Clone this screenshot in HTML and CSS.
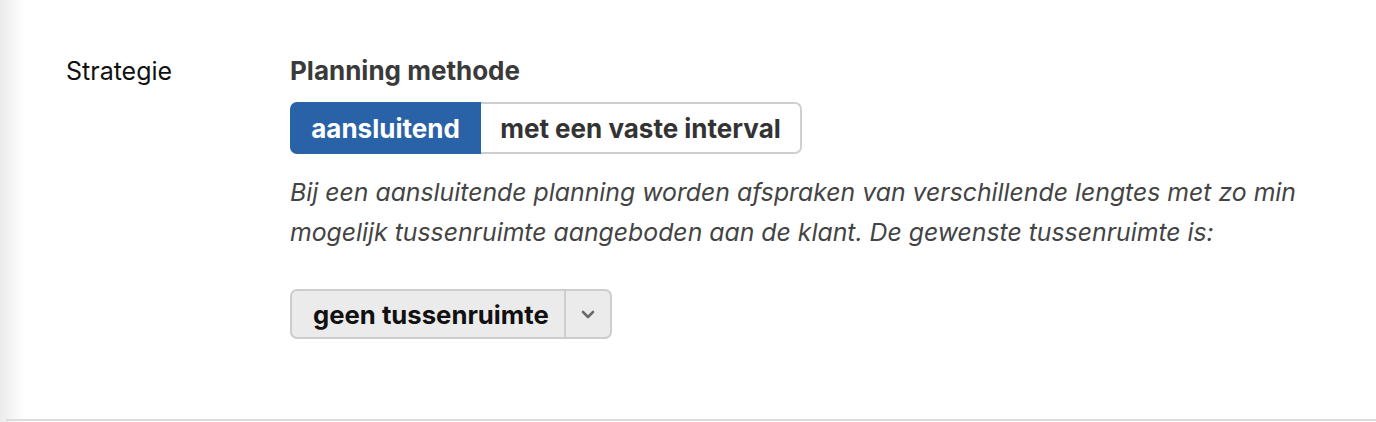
FILE: index.html
```html
<!DOCTYPE html>
<html lang="nl">
<head>
<meta charset="utf-8">
<link rel="stylesheet" href="styles.css">
</head>
<body>
<div class="page">
  <div class="section">
    <div class="row">
      <div class="label">Strategie</div>
      <div class="content">
        <div class="title">Planning methode</div>
        <div class="segmented">
          <button class="seg active">aansluitend</button>
          <button class="seg">met een vaste interval</button>
        </div>
        <p class="desc">Bij een aansluitende planning worden afspraken van verschillende lengtes met zo min mogelijk tussenruimte aangeboden aan de klant. De gewenste tussenruimte is:</p>
        <div class="select">
          <span class="select-value">geen tussenruimte</span>
          <span class="select-arrow">
            <svg width="14" height="9" viewBox="0 0 14 9"><path d="M2 2 L7 7 L12 2" fill="none" stroke="#6a6a6a" stroke-width="2.6" stroke-linecap="round" stroke-linejoin="round"/></svg>
          </span>
        </div>
      </div>
    </div>
  </div>
</div>
</body>
</html>
```
FILE: styles.css
```css
html, body {
  margin: 0;
  padding: 0;
  background: #fff;
}
body {
  font-family: Inter, "Noto Sans", sans-serif;
  color: #111;
}
.page {
  width: 1376px;
  height: 422px;
  background: linear-gradient(to right, #ebebeb 0px, #f5f5f5 12px, #ffffff 26px);
}
.section {
  height: 421px;
  box-sizing: border-box;
  border-bottom: 2px solid #dcdcdc;
  margin-left: 6px;
}
.row {
  display: flex;
  padding-top: 56px;
  padding-left: 60px;
}
.label {
  width: 224px;
  font-size: 25px;
  line-height: 30px;
  color: #111;
}
.content {
  display: flex;
  flex-direction: column;
  align-items: flex-start;
}
.title {
  font-size: 26px;
  font-weight: 700;
  color: #3a3a3a;
  line-height: 30px;
}
.segmented {
  display: flex;
  margin-top: 16px;
  height: 52px;
}
.seg {
  font-family: inherit;
  font-size: 26px;
  font-weight: 700;
  color: #333;
  background: #fff;
  border: 2px solid #cfcfcf;
  padding: 0;
  margin: 0;
  height: 52px;
  text-align: center;
}
.seg.active {
  background: #2962a7;
  border-color: #2962a7;
  color: #fff;
  border-radius: 7px 0 0 7px;
  width: 191px;
}
.seg:last-child {
  border-left: none;
  border-radius: 0 7px 7px 0;
  width: 321px;
}
.desc {
  margin: 18px 0 0 0;
  font-size: 24.8px;
  font-style: italic;
  line-height: 40px;
  color: #444;
  width: 1040px;
}
.select {
  display: flex;
  align-items: stretch;
  margin-top: 37px;
  height: 50px;
  box-sizing: border-box;
  border: 2px solid #cdcdcd;
  border-radius: 7px;
  background: #ebebeb;
}
.select-value {
  display: flex;
  align-items: center;
  padding: 0 15px 0 21px;
  font-size: 25.7px;
  font-weight: 700;
  color: #111;
  border-right: 2px solid #cdcdcd;
}
.select-arrow {
  display: flex;
  align-items: center;
  justify-content: center;
  width: 44px;
}
```
